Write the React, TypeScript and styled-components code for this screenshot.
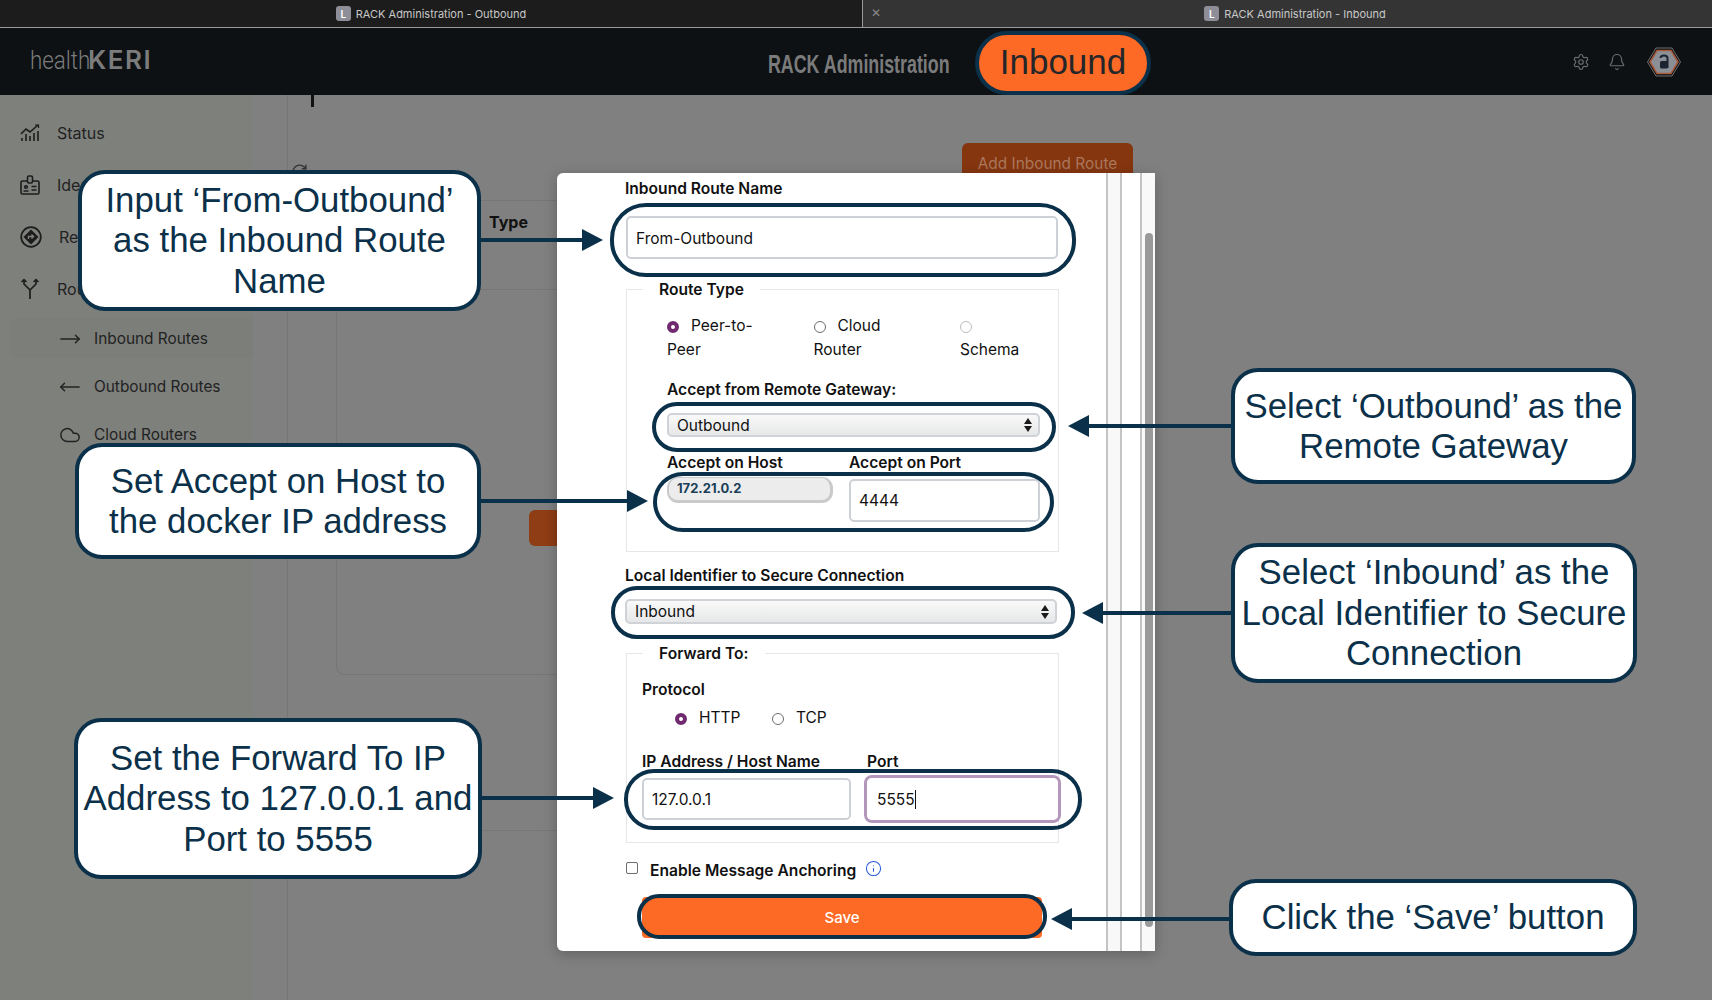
import React from 'react'
import styled, { createGlobalStyle } from 'styled-components'
import { Bell, Cloud, Info, MoveLeft, MoveRight, RotateCw, Settings } from 'lucide-react'

const navy = '#0b3049'
const orange = '#fd6a25'

const GlobalStyle = createGlobalStyle`
    html, body {
        margin: 0;
        padding: 0;
        background: #808080;
    }
    * {
        box-sizing: border-box;
    }
`

const Page = styled.div`
    position: relative;
    width: 1712px;
    height: 1000px;
    overflow: hidden;
    background: #808080;
    font-family: Inter, "Liberation Sans", sans-serif;
    font-size: 16px;
`

const TabBar = styled.div`
    display: flex;
    height: 28px;
    border-bottom: 1px solid #9a9a9a;
`

const Tab = styled.div<{ $active?: boolean }>`
    position: relative;
    display: flex;
    align-items: center;
    justify-content: center;
    gap: 5px;
    width: ${p => (p.$active ? '850px' : '862px')};
    padding-left: ${p => (p.$active ? '15px' : '0')};
    background: ${p => (p.$active ? '#343434' : '#1c1c1c')};
    border-left: ${p => (p.$active ? '1px solid #9a9a9a' : 'none')};
    color: #c8c8c8;
    font-size: 11px;
`

const TabClose = styled.span`
    position: absolute;
    left: 8px;
    top: 6px;
    color: #8a8a8a;
    font-size: 12px;
    font-family: "Liberation Sans", sans-serif;
`

const Favicon = styled.span`
    display: flex;
    align-items: center;
    justify-content: center;
    width: 15px;
    height: 15px;
    border-radius: 3px;
    background: #8e8e98;
    color: #fff;
    font-size: 10px;
    font-weight: 600;
`

const Header = styled.header`
    display: flex;
    align-items: center;
    height: 67px;
    padding: 0 31px 0 30px;
    background: #0d1114;
`

const Logo = styled.div`
    display: flex;
    align-items: baseline;
    width: 122px;
    color: #7c7c7c;
    line-height: 24px;
    margin-top: -3px;
`

const LogoThin = styled.span`
    display: inline-block;
    width: 58px;
    font-family: Roboto, sans-serif;
    font-weight: 300;
    font-size: 26px;
    transform: scaleX(0.86);
    transform-origin: left;
`

const LogoBold = styled.span`
    font-family: Inter, sans-serif;
    font-size: 26px;
    font-weight: 600;
    letter-spacing: 1.5px;
`

const AppTitle = styled.div`
    margin: 6px 0 0 616px;
    width: 207px;
    color: #7b7b7b;
    font-family: "Liberation Sans", sans-serif;
    font-weight: 700;
    font-size: 25px;
    white-space: nowrap;
    transform: scaleX(0.713);
    transform-origin: left;
`

const EnvPill = styled.div`
    display: flex;
    align-items: center;
    justify-content: center;
    width: 176px;
    height: 64px;
    margin-top: 3px;
    padding-bottom: 3px;
    border: 4px solid ${navy};
    border-radius: 32px;
    background: ${orange};
    color: #25262a;
    font-family: "Liberation Sans", sans-serif;
    font-size: 35px;
`

const HeaderIcons = styled.div`
    display: flex;
    align-items: center;
    gap: 18px;
    margin-left: auto;
    color: #6c6c6c;
`

const AvatarSlot = styled.div`
    display: flex;
    margin-left: 3px;
`

const Body = styled.div`
    display: flex;
    height: 905px;
`

const Sidebar = styled.nav`
    width: 253px;
    padding-top: 12px;
    background: #7e807c;
    color: #222;
`

const NavRow = styled.div`
    display: flex;
    align-items: center;
    gap: 17px;
    height: 52px;
    padding-left: 20px;
    white-space: nowrap;
`

const SubList = styled.div`
    padding-top: 3px;
    font-size: 15.4px;
`

const SubRow = styled.div<{ $active?: boolean }>`
    display: flex;
    align-items: center;
    gap: 13px;
    height: 40px;
    margin: 0 0 8px 10px;
    padding: 1px 0 0 49px;
    border-radius: 6px 0 0 6px;
    background: ${p => (p.$active ? '#7c7e7a' : 'transparent')};
    white-space: nowrap;
`

const Main = styled.main`
    width: 880px;
    margin-left: 34px;
    border-left: 1px solid #757575;
`

const TitleStub = styled.div`
    width: 3px;
    height: 12px;
    margin-left: 23px;
    background: #111;
`

const Toolbar = styled.div`
    display: flex;
    justify-content: space-between;
    height: 40px;
    margin-top: 36px;
    padding-left: 3px;
    width: 845px;
    color: #333;
`

const RefreshSlot = styled.div`
    margin-top: 20px;
`

const AddButton = styled.div`
    width: 171px;
    padding-top: 11px;
    border-radius: 6px;
    background: #85360f;
    color: #ab785d;
    font-size: 15.4px;
    text-align: center;
    white-space: nowrap;
`

const Card = styled.div`
    width: 797px;
    height: 475px;
    margin: 17px 0 0 48px;
    border: 1px solid #767676;
    border-top: none;
    border-radius: 0 0 8px 8px;
`

const TableHead = styled.div`
    height: 90px;
    padding: 11px 0 0 152px;
    border-top: 1px solid #767676;
    border-bottom: 1px solid #767676;
    color: #111;
    font-weight: 700;
    line-height: 20px;
`

const EmptyBlock = styled.div`
    width: 414px;
    height: 36px;
    margin: 220px 0 0 192px;
    border-radius: 6px;
    background: #8f3d15;
`

const FootLine = styled.div`
    width: 845px;
    margin-top: 155px;
    border-top: 1px solid #767676;
`

const Modal = styled.div`
    position: absolute;
    left: 557px;
    top: 173px;
    display: flex;
    width: 598px;
    height: 778px;
    border-radius: 6px 0 0 6px;
    background: #fff;
    box-shadow: 0 3px 14px rgba(0, 0, 0, 0.25);
    color: #111;
`

const Form = styled.form`
    width: 549px;
    padding: 5px 0 0 68px;
`

const Stripe = styled.div<{ $w: number; $bg: string }>`
    width: ${p => p.$w}px;
    border-left: 2px solid #c4c4c4;
    background: ${p => p.$bg};
`

const ScrollTrack = styled.div`
    width: 15px;
    padding: 60px 0 24px 3px;
    border-left: 2px solid #c4c4c4;
    background: #f9f9f9;
`

const ScrollThumb = styled.div`
    width: 8px;
    height: 100%;
    border-radius: 4px;
    background: #9a9a9a;
`

const Label = styled.div<{ $top?: number; $left?: number }>`
    height: 20px;
    margin: ${p => p.$top ?? 0}px 0 0 ${p => p.$left ?? 0}px;
    font-size: 15.6px;
    font-weight: 600;
    line-height: 22px;
    white-space: nowrap;
`

const TextBox = styled.div<{ $w: number; $top?: number; $focus?: boolean }>`
    display: flex;
    align-items: center;
    width: ${p => p.$w}px;
    height: 43px;
    margin-top: ${p => p.$top ?? 0}px;
    padding: 1px 0 0 8px;
    border: 2px solid ${p => (p.$focus ? '#fff' : '#cdd0d4')};
    border-radius: 5px;
    box-shadow: ${p => (p.$focus ? '0 0 0 3px #b297ba' : 'none')};
    font-size: 15.5px;
`

const Caret = styled.span`
    width: 1px;
    height: 19px;
    background: #111;
`

const NameBox = styled(TextBox)`
    margin-left: 1px;
`

const Fieldset = styled.fieldset<{ $top: number; $pad: number; $bottom: number }>`
    width: 433px;
    min-width: 0;
    margin: ${p => p.$top}px 0 0 1px;
    padding: 0 0 ${p => p.$bottom}px ${p => p.$pad}px;
    border: 1px solid #e4e6e8;
`

const Legend = styled.legend<{ $shift: number }>`
    height: 20px;
    margin-left: ${p => p.$shift}px;
    padding: 0 16px;
    font-size: 15.6px;
    font-weight: 600;
    line-height: 22px;
`

const RadioGrid = styled.div`
    display: grid;
    grid-template-columns: repeat(3, 146.5px);
    margin-top: 15px;
    font-size: 15.5px;
    line-height: 24px;
`

const RadioDot = styled.span<{ $on?: boolean; $faint?: boolean }>`
    display: inline-block;
    width: 12px;
    height: 12px;
    margin-right: 12px;
    vertical-align: -2px;
    border-radius: 50%;
    background: #fff;
    border: ${p => (p.$on ? '4px solid #6f2a6f' : `1px solid ${p.$faint ? '#bdbdbd' : '#6d6d6d'}`)};
`

const ProtocolRow = styled.div`
    display: flex;
    margin: 7px 0 0 33px;
    font-size: 15.5px;
    line-height: 24px;
`

const ProtocolOption = styled.div`
    width: 97px;
`

const Dropdown = styled.div<{ $w: number; $top: number; $h: number }>`
    display: flex;
    align-items: center;
    justify-content: space-between;
    width: ${p => p.$w}px;
    height: ${p => p.$h}px;
    margin-top: ${p => p.$top}px;
    padding: 0 6px 0 8px;
    border: 2px solid #cfd2d6;
    border-radius: 5px;
    background: linear-gradient(#f9f9f9, #e6e7e8);
    font-size: 15.5px;
`

const PairRow = styled.div<{ $top: number }>`
    display: flex;
    margin-top: ${p => p.$top}px;
`

const PairCol = styled.div<{ $w: number }>`
    width: ${p => p.$w}px;
`

const HostBox = styled.div`
    width: 166px;
    height: 26px;
    margin-top: 5px;
    padding: 1px 0 0 8px;
    border: 2px solid #c9cacc;
    border-top-width: 1px;
    border-right-width: 3px;
    border-bottom-width: 3px;
    border-radius: 11px;
    background: #ececec;
    color: #1b3f58;
    font-size: 13px;
    font-weight: 700;
    line-height: 18px;
`

const PortBox = styled(TextBox)`
    margin-top: 7px;
    padding-top: 0;
`

const FieldBox = styled(TextBox)`
    height: 42px;
`

const AnchorRow = styled.div`
    display: flex;
    align-items: center;
    height: 24px;
    margin: 15px 0 0 1px;
    color: #2a5bd7;
`

const CheckBox = styled.span`
    width: 12px;
    height: 12px;
    margin: -4px 12px 0 0;
    border: 1px solid #6d6d6d;
    border-radius: 2px;
`

const AnchorText = styled.span`
    margin-right: 9px;
    color: #111;
    font-size: 15.6px;
    font-weight: 600;
`

const InfoSlot = styled.span`
    display: flex;
    margin-top: -4px;
`

const SaveButton = styled.div`
    display: flex;
    align-items: center;
    justify-content: center;
    width: 400px;
    height: 41px;
    margin: 15px 0 0 17px;
    border-radius: 4px;
    background: ${orange};
    color: #fff;
    font-size: 15px;
    font-weight: 500;
`

/* annotation layer: these sit over the screenshot at fixed spots */
const Ring = styled.div<{ $x: number; $y: number; $w: number; $h: number; $r: number }>`
    position: absolute;
    left: ${p => p.$x}px;
    top: ${p => p.$y}px;
    width: ${p => p.$w}px;
    height: ${p => p.$h}px;
    border: 4px solid ${navy};
    border-radius: ${p => p.$r}px;
`

const Callout = styled.div<{ $x: number; $y: number; $w: number; $h: number }>`
    position: absolute;
    left: ${p => p.$x}px;
    top: ${p => p.$y}px;
    display: flex;
    align-items: center;
    justify-content: center;
    width: ${p => p.$w}px;
    height: ${p => p.$h}px;
    border: 4px solid ${navy};
    border-radius: 27px;
    background: #fff;
    color: ${navy};
    font-family: "Liberation Sans", Arial, sans-serif;
    font-size: 34.8px;
    line-height: 40.5px;
    text-align: center;
    white-space: nowrap;
`

const ArrowLine = styled.svg<{ $x: number; $y: number; $w: number }>`
    position: absolute;
    left: ${p => p.$x}px;
    top: ${p => p.$y - 12}px;
    width: ${p => p.$w}px;
    height: 24px;
`

const Arrow = ({ from, to, y }: { from: number; to: number; y: number }) => {
    const w = Math.abs(to - from)
    const right = to > from
    return (
        <ArrowLine $x={Math.min(from, to)} $y={y} $w={w} viewBox={`0 0 ${w} 24`}>
            {right ? (
                <>
                    <rect x="0" y="10" width={w - 18} height="4" fill={navy} />
                    <polygon points={`${w},12 ${w - 21},1 ${w - 21},23`} fill={navy} />
                </>
            ) : (
                <>
                    <rect x="18" y="10" width={w - 18} height="4" fill={navy} />
                    <polygon points="0,12 21,1 21,23" fill={navy} />
                </>
            )}
        </ArrowLine>
    )
}

const StatusIcon = () => (
    <svg width="20" height="18" viewBox="0 0 20 18" fill="none" stroke="#1c1c1c" strokeWidth="1.6">
        <path d="M1 10 L6 5 L10 8 L18 1" />
        <path d="M15 1 H18.5 V4" strokeWidth="1.2" />
        <path d="M2 17 V14 M6 17 V10 M10 17 V12 M14 17 V9 M18 17 V7" />
    </svg>
)

const BadgeIcon = () => (
    <svg width="20" height="20" viewBox="0 0 20 20" fill="none" stroke="#1c1c1c" strokeWidth="1.6">
        <rect x="1" y="6" width="18" height="13" rx="1.5" />
        <rect x="7.5" y="1" width="5" height="7" rx="1.5" fill="#7e807c" />
        <circle cx="6" cy="12" r="1.3" />
        <path d="M3.5 16 H8.5 M11.5 11.5 H16.5 M11.5 15 H16.5" />
    </svg>
)

const RemoteIcon = () => (
    <svg width="22" height="22" viewBox="0 0 22 22" fill="none" stroke="#1c1c1c" strokeWidth="1.7">
        <circle cx="11" cy="11" r="9.8" />
        <path d="M11 3.5 L18.5 11 L11 18.5 L3.5 11 Z" fill="#1c1c1c" stroke="none" />
        <path d="M8.5 13 V10.5 H13 M11.5 8.6 L13.5 10.5 L11.5 12.4" stroke="#7e807c" strokeWidth="1.4" />
    </svg>
)

const ForkIcon = () => (
    <svg width="20" height="22" viewBox="0 0 20 22" fill="none" stroke="#1c1c1c" strokeWidth="1.7">
        <path d="M10 21 V12 L4 6 V2 M10 12 L16 6 V2" />
        <path d="M1.5 4 L4 1.5 L6.5 4 M13.5 4 L16 1.5 L18.5 4" strokeWidth="1.5" />
    </svg>
)

const HexAvatar = () => (
    <svg width="34" height="30" viewBox="0 0 34 30" fill="none">
        <polygon points="9,1 25,1 33.5,15 25,29 9,29 0.5,15" stroke="#6f6f6f" strokeWidth="1" />
        <polygon points="10,3.5 24,3.5 31,15 24,26.5 10,26.5 3,15" stroke="#a8593a" strokeWidth="1.6" fill="#8c9096" />
        <path d="M13.5 11 C13.5 7.5 20.5 7.5 20.5 11 V21" stroke="#1b2430" strokeWidth="2" />
        <rect x="13" y="14" width="8" height="7.5" rx="1.5" fill="#1b2430" />
    </svg>
)

const UpDown = () => (
    <svg width="8" height="14" viewBox="0 0 8 14" fill="#1a1a1a">
        <polygon points="4,0 8,6 0,6" />
        <polygon points="4,14 8,8 0,8" />
    </svg>
)

const App = () => {
    return (
        <Page>
            <GlobalStyle />
            <TabBar>
                <Tab>
                    <Favicon>L</Favicon>
                    RACK Administration - Outbound
                </Tab>
                <Tab $active>
                    <TabClose>✕</TabClose>
                    <Favicon>L</Favicon>
                    RACK Administration - Inbound
                </Tab>
            </TabBar>
            <Header>
                <Logo>
                    <LogoThin>health</LogoThin>
                    <LogoBold>KERI</LogoBold>
                </Logo>
                <AppTitle>RACK Administration</AppTitle>
                <EnvPill>Inbound</EnvPill>
                <HeaderIcons>
                    <Settings size={18} strokeWidth={1.6} />
                    <Bell size={18} strokeWidth={1.6} />
                    <AvatarSlot><HexAvatar /></AvatarSlot>
                </HeaderIcons>
            </Header>
            <Body>
                <Sidebar>
                    <NavRow><StatusIcon />Status</NavRow>
                    <NavRow><BadgeIcon />Identifiers</NavRow>
                    <NavRow><RemoteIcon />Remotes</NavRow>
                    <NavRow><ForkIcon />Routes</NavRow>
                    <SubList>
                        <SubRow $active><MoveRight size={22} strokeWidth={1.6} />Inbound Routes</SubRow>
                        <SubRow><MoveLeft size={22} strokeWidth={1.6} />Outbound Routes</SubRow>
                        <SubRow><Cloud size={22} strokeWidth={1.6} />Cloud Routers</SubRow>
                    </SubList>
                </Sidebar>
                <Main>
                    <TitleStub />
                    <Toolbar>
                        <RefreshSlot><RotateCw size={17} /></RefreshSlot>
                        <AddButton>Add Inbound Route</AddButton>
                    </Toolbar>
                    <Card>
                        <TableHead>Type</TableHead>
                        <EmptyBlock />
                    </Card>
                    <FootLine />
                </Main>
            </Body>

            <Modal>
                <Form>
                    <Label>Inbound Route Name</Label>
                    <NameBox $w={432} $top={18}>From-Outbound</NameBox>
                    <Fieldset $top={20} $pad={40} $bottom={29}>
                        <Legend $shift={-24}>Route Type</Legend>
                        <RadioGrid>
                            <div><RadioDot $on />Peer-to-<br />Peer</div>
                            <div><RadioDot />Cloud<br />Router</div>
                            <div><RadioDot $faint /><br />Schema</div>
                        </RadioGrid>
                        <Label $top={17}>Accept from Remote Gateway:</Label>
                        <Dropdown $w={373} $h={24} $top={14}>Outbound<UpDown /></Dropdown>
                        <PairRow $top={15}>
                            <PairCol $w={182}>
                                <Label>Accept on Host</Label>
                                <HostBox>172.21.0.2</HostBox>
                            </PairCol>
                            <PairCol $w={191}>
                                <Label>Accept on Port</Label>
                                <PortBox $w={191}>4444</PortBox>
                            </PairCol>
                        </PairRow>
                    </Fieldset>
                    <Label $top={13}>Local Identifier to Secure Connection</Label>
                    <Dropdown $w={432} $h={25} $top={14}>Inbound<UpDown /></Dropdown>
                    <Fieldset $top={19} $pad={15} $bottom={22}>
                        <Legend $shift={1}>Forward To:</Legend>
                        <Label $top={16}>Protocol</Label>
                        <ProtocolRow>
                            <ProtocolOption><RadioDot $on />HTTP</ProtocolOption>
                            <ProtocolOption><RadioDot />TCP</ProtocolOption>
                        </ProtocolRow>
                        <PairRow $top={21}>
                            <PairCol $w={225}>
                                <Label>IP Address / Host Name</Label>
                                <FieldBox $w={209} $top={7}>127.0.0.1</FieldBox>
                            </PairCol>
                            <PairCol $w={191}>
                                <Label>Port</Label>
                                <FieldBox $w={191} $top={7} $focus>5555<Caret /></FieldBox>
                            </PairCol>
                        </PairRow>
                    </Fieldset>
                    <AnchorRow>
                        <CheckBox />
                        <AnchorText>Enable Message Anchoring</AnchorText>
                        <InfoSlot><Info size={17} strokeWidth={1.5} /></InfoSlot>
                    </AnchorRow>
                    <SaveButton>Save</SaveButton>
                </Form>
                <Stripe $w={14} $bg="#f8f8f8" />
                <Stripe $w={20} $bg="#fff" />
                <ScrollTrack><ScrollThumb /></ScrollTrack>
            </Modal>

            <Ring $x={610} $y={203} $w={466} $h={74} $r={36} />
            <Ring $x={652} $y={402} $w={404} $h={50} $r={25} />
            <Ring $x={653} $y={472} $w={401} $h={60} $r={30} />
            <Ring $x={611} $y={586} $w={464} $h={53} $r={26} />
            <Ring $x={624} $y={769} $w={458} $h={61} $r={30} />
            <Ring $x={637} $y={894} $w={410} $h={45} $r={22} />

            <Arrow from={478} to={603} y={240} />
            <Arrow from={478} to={648} y={501} />
            <Arrow from={480} to={614} y={798} />
            <Arrow from={1238} to={1068} y={426} />
            <Arrow from={1232} to={1082} y={613} />
            <Arrow from={1232} to={1051} y={919} />

            <Callout $x={78} $y={170} $w={403} $h={141}>Input ‘From-Outbound’<br />as the Inbound Route<br />Name</Callout>
            <Callout $x={75} $y={443} $w={406} $h={116}>Set Accept on Host to<br />the docker IP address</Callout>
            <Callout $x={74} $y={718} $w={408} $h={161}>Set the Forward To IP<br />Address to 127.0.0.1 and<br />Port to 5555</Callout>
            <Callout $x={1231} $y={368} $w={405} $h={116}>Select ‘Outbound’ as the<br />Remote Gateway</Callout>
            <Callout $x={1231} $y={543} $w={406} $h={140}>Select ‘Inbound’ as the<br />Local Identifier to Secure<br />Connection</Callout>
            <Callout $x={1229} $y={879} $w={408} $h={77}>Click the ‘Save’ button</Callout>
        </Page>
    )
}

export default App
